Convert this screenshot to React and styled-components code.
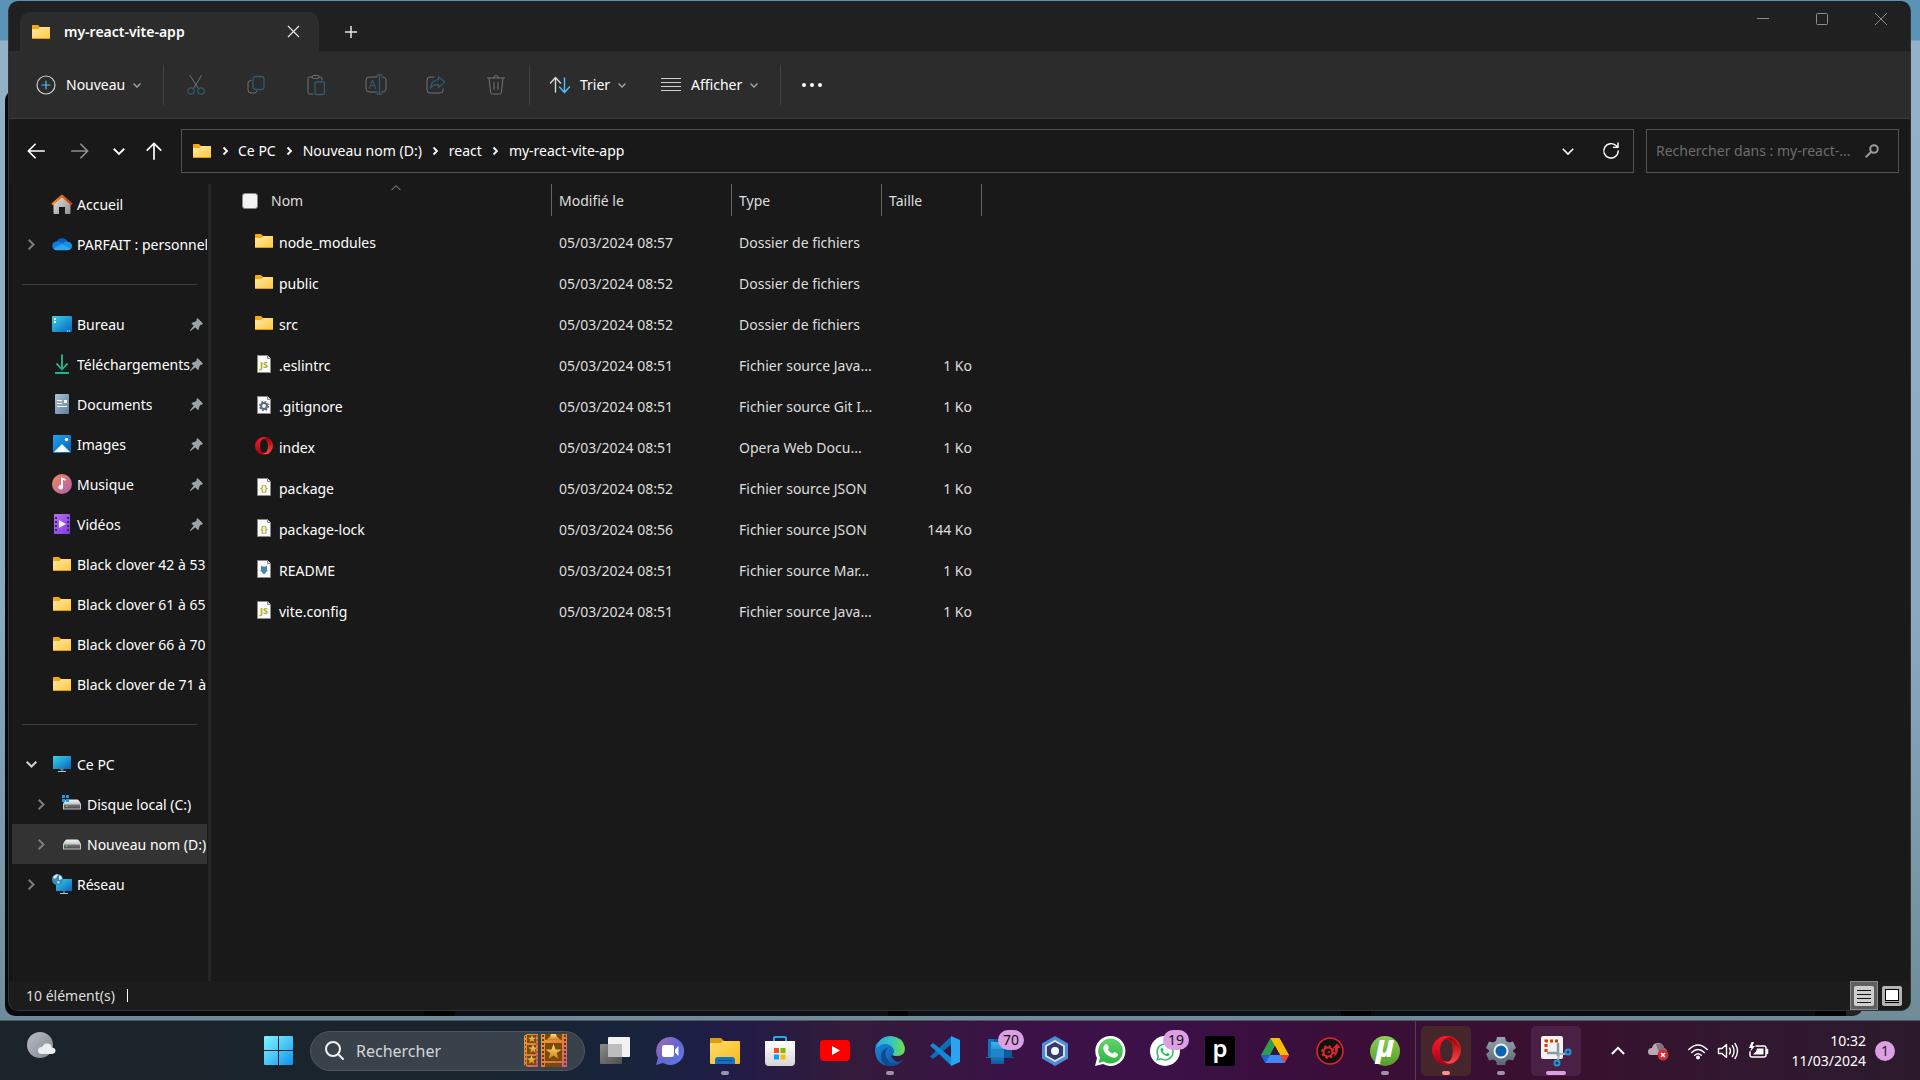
import React from "react";
import styled, { createGlobalStyle } from "styled-components";
import { FaWhatsapp } from "react-icons/fa";

const GlobalStyle = createGlobalStyle`
  *, *::before, *::after { box-sizing: border-box; }
  body {
    margin: 0;
    font-family: "Noto Sans", "Open Sans", sans-serif;
    font-size: 14px;
    line-height: 20px;
    color: #fff;
    background: #7f9fb2;
  }
  button, input { font: inherit; color: inherit; }
  button { border: 0; padding: 0; background: none; cursor: default; }
  a { color: inherit; text-decoration: none; cursor: default; }
  svg { display: block; flex: none; overflow: visible; }
`;

/* ---------- shared gradients ---------- */

const DefsSvg = styled.svg`
  position: absolute;
`;

const Grad = ({ id, from, to, mid, x2 = 1, y2 = 1 }) => (
  <linearGradient id={id} x1="0" y1="0" x2={x2} y2={y2}>
    <stop offset="0" stopColor={from} />
    {mid && <stop offset="0.5" stopColor={mid} />}
    <stop offset="1" stopColor={to} />
  </linearGradient>
);

const Gradients = () => (
  <DefsSvg width="0" height="0" aria-hidden="true">
    <defs>
      <Grad id="gFolder" from="#ffe9a6" to="#ffc83d" />
      <Grad id="gHouse" from="#e6e6e6" to="#8f8f8f" />
      <Grad id="gRoof" from="#ff8c1a" to="#c8430b" x2={1} y2={0} />
      <Grad id="gScreen" from="#37d3e6" to="#0b63c0" />
      <Grad id="gDown" from="#2fd07f" to="#12a8a0" x2={0} />
      <Grad id="gDoc" from="#b0c1d6" to="#5f7f9f" />
      <Grad id="gImage" from="#1fa3ec" to="#0562bd" />
      <Grad id="gMusic" from="#f58a5b" to="#a95fb0" />
      <Grad id="gVideo" from="#b86ff0" to="#7a3fd8" />
      <Grad id="gOperaOut" from="#ff1b2d" to="#a70014" x2={0} />
      <Grad id="gOperaIn" from="#9c0000" to="#ff4b4b" x2={0} />
      <Grad id="gDrive" from="#f4f4f4" to="#bfbfbf" x2={0} />
      <Grad id="gDriveFront" from="#7a7a7a" to="#4a4a4a" x2={0} />
      <Grad id="gWin" from="#7df3ff" mid="#4cc8f8" to="#0a92ef" />
      <Grad id="gMoon" from="#b9bec6" to="#80858e" />
      <Grad id="gChat" from="#a86fb0" mid="#6565d0" to="#5a7fe8" />
      <Grad id="gExpl" from="#ffdf6b" to="#f9b71a" />
      <Grad id="gStore" from="#ffffff" to="#d5d5d5" x2={0} />
      <Grad id="gEdgeTop" from="#2aa7e0" mid="#33c4c4" to="#6fe04a" x2={1} y2={0} />
      <Grad id="gEdgeLow" from="#1b8be0" to="#0c4f9e" />
      <Grad id="gWa" from="#63d36b" to="#2cb742" x2={0} />
      <Grad id="gUt" from="#8ccf50" to="#559c30" x2={0} />
      <Grad id="gGear" from="#97a3ad" to="#5a6670" x2={0} />
      <Grad id="gGold" from="#ffe680" to="#c97f12" x2={0} />
      <Grad id="gFilm" from="#f0a030" mid="#e0803a" to="#c85a8a" />
      <Grad id="gGray" from="#8a8a8a" to="#4e4e4e" />
      <Grad id="gFeed" from="#38b6f0" to="#0a5a9e" x2={0} />
    </defs>
  </DefsSvg>
);

/* ---------- small icons ---------- */

const FolderIcon = () => (
  <svg width="18" height="14" viewBox="0 0 18 14">
    <path d="M0 .7Q0 0 .7 0H6l2 2h9.300q.7 0 .7.700V8H0z" fill="#f5a90a" />
    <path d="M0 4h6.500L8 2h9.300q.7 0 .7.700V14H0z" fill="url(#gFolder)" />
    <path d="M0 13.500h18" stroke="#e09a10" />
  </svg>
);

const HomeIcon = () => (
  <svg width="20" height="20" viewBox="0 0 20 20">
    <path d="M1.500 8.500 10 1.500l8.500 7V19q0 1-1 1H13v-7H7v7H2.500q-1 0-1-1z" fill="url(#gHouse)" />
    <path d="m.8 9.800 9.200-8 9.200 8" fill="none" stroke="url(#gRoof)" strokeWidth="2.400" strokeLinecap="round" strokeLinejoin="round" />
  </svg>
);

const CloudIcon = () => (
  <svg width="20" height="14" viewBox="0 0 20 14">
    <path d="M4.500 5A6 6 0 0 1 15.500 4.500l-6 6z" fill="#0a5fc4" />
    <path d="M5 4.500Q8 4 10.500 6l4 3-9 4H4a4.200 4.200 0 0 1 1-8.500z" fill="#0f7fe0" />
    <path d="M10.500 6.500q2-2.500 5-2Q20 5 20 9t-4 4z" fill="#1490df" />
    <path d="M1.500 11.500 10 7l8.500 4.500Q17.500 13.200 16 13.200H4q-1.500 0-2.500-1.700z" fill="#2aa7f0" />
  </svg>
);

const DesktopIcon = () => (
  <svg width="20" height="16" viewBox="0 0 20 16">
    <rect width="20" height="16" rx="1" fill="url(#gScreen)" />
    <path d="M2 2h2v2H2zM2 5h2v2H2z" fill="#fff" />
    <path d="M15 15h1M17 15h1" stroke="#fff" />
  </svg>
);

const DownloadIcon = () => (
  <svg width="20" height="20" viewBox="0 0 20 20" fill="none" stroke="url(#gDown)" strokeWidth="1.800">
    <path d="M10 .5V15.500" stroke="#22c08c" />
    <path d="m4.500 9.500 5.500 6 5.500-6" />
    <path d="M3 19h14" stroke="#22c39a" />
  </svg>
);

const DocumentIcon = () => (
  <svg width="14" height="20" viewBox="0 0 14 20">
    <rect width="14" height="20" rx="1" fill="url(#gDoc)" />
    <path d="M2 6.500h5M2 9.500h5M2 12.500h10M9 7.500h3" stroke="#fff" strokeWidth="1.200" />
    <path d="M9 6h3v3H9z" fill="#fff" />
  </svg>
);

const ImageIcon = () => (
  <svg width="18" height="18" viewBox="0 0 18 18">
    <rect width="18" height="18" rx="1" fill="url(#gImage)" />
    <path d="m1 17 7.300-7.300q.7-.7 1.400 0L17 17z" fill="#f2f8ff" />
    <circle cx="13.500" cy="4.500" r="1.700" fill="#fff" />
  </svg>
);

const MusicIcon = () => (
  <svg width="20" height="20" viewBox="0 0 20 20">
    <circle cx="10" cy="10" r="10" fill="url(#gMusic)" />
    <circle cx="8.700" cy="13.200" r="2.300" fill="#fff" />
    <path d="M10 13V4.500L13.500 6" fill="none" stroke="#fff" strokeWidth="1.800" />
  </svg>
);

const VideoIcon = () => (
  <svg width="16" height="20" viewBox="0 0 16 20">
    <rect width="16" height="20" rx="1" fill="url(#gVideo)" />
    <path d="M2 3v15M14 3v15" stroke="#3d2270" strokeWidth="2" strokeDasharray="2 2" />
    <path d="M5 6v8l7-4z" fill="#f3e9ff" />
  </svg>
);

const ScreenIcon = () => (
  <svg width="18" height="16" viewBox="0 0 18 16">
    <rect width="18" height="13" rx=".5" fill="url(#gScreen)" />
    <path d="M7.500 13h3v1.500h-3z" fill="#888" />
    <path d="M5 15.500h8" stroke="#b9c2ca" />
  </svg>
);

const DriveIcon = ({ system }) => (
  <svg width="18" height="11" viewBox="0 0 18 11">
    <path d="M0 5Q2 .5 4 .5h10q2 0 4 4.500v1H0z" fill="url(#gDrive)" />
    <path d="M0 5h18v5.500H0z" fill="#c4c4c4" />
    <path d="M1 5.500h16v4H1z" fill="url(#gDriveFront)" />
    <path d="M3 6.500h1.500V8H3z" fill="#3be04a" />
    {system && <path d="M-1-4h3v3h-3zM3-4h3v3H3zM-1 0h3v3h-3zM3 0h3v3H3z" fill="#1a9af0" />}
  </svg>
);

const NetworkIcon = () => (
  <svg width="20" height="20" viewBox="0 0 20 20">
    <rect x="4" y="5" width="16" height="12" fill="url(#gScreen)" />
    <path d="M8 19.500h8M12 17v2" stroke="#b9c2ca" />
    <circle cx="5.500" cy="5.500" r="5.500" fill="#3a8cc0" />
    <path d="M1 3q4-4 5-2L4 4 2 5zM7 1q3 1 3 4l-3 1zM5 7l3 1-2 2z" fill="#d8eef8" />
  </svg>
);

const PinIcon = () => (
  <svg width="13" height="13" viewBox="0 0 13 13" fill="#97a2aa">
    <path d="M7.500 0 13 5.500 11.500 7 10.500 6.800 9 9.500 8.700 11.500 7.800 12 1.500 5.500 2.500 4.500 4.500 4 6.800 2.500 6.500 1z" />
    <path d="M4 8 .3 12.700 5 9z" stroke="#97a2aa" />
  </svg>
);

const FileIcon = ({ kind }) => (
  <svg width="14" height="18" viewBox="0 0 14 18">
    <path d="M.5.500h10l3 3v14H.500z" fill="#fbfbfb" stroke="#8b8b8b" />
    <path d="M10.500.500v3h3" fill="#ddd" stroke="#8b8b8b" />
    {kind === "js" && (
      <text x="7" y="13" textAnchor="middle" fontSize="9" fontWeight="800" fill="#b0b02c">JS</text>
    )}
    {kind === "json" && (
      <text x="7" y="13" textAnchor="middle" fontSize="9" fontWeight="700" fill="#b0b02c">{"{}"}</text>
    )}
    {kind === "git" && (
      <g fill="none" stroke="#5b6b78">
        <circle cx="7" cy="10" r="2.900" strokeWidth="2" />
        <circle cx="7" cy="10" r="4.400" strokeWidth="1.400" strokeDasharray="1.730 1.730" />
      </g>
    )}
    {kind === "md" && <path d="M4 5.500 5.500 6.500h3L10 5.500V10h1l-4 4.500L3 10h1z" fill="#4a8aa8" />}
  </svg>
);

const OperaIcon = ({ width = 18, height = 18 }) => (
  <svg width={width} height={height} viewBox="0 0 18 18" preserveAspectRatio="none">
    <path fillRule="evenodd" d="M9 0a9 9 0 1 0 0 18A9 9 0 1 0 9 0zM9 2c2.600 0 4 3.200 4 7s-1.400 7-4 7-4-3.200-4-7 1.400-7 4-7z" fill="url(#gOperaOut)" />
    <path d="M6.500 3.200Q8.500.9 11 .8 15 1 18 9q-1.500 7.500-7 8.300-2.500 0-4.500-2.500Q8 16.200 9.500 16 13 15.500 13 9T9.500 2Q8 1.800 6.500 3.200z" fill="url(#gOperaIn)" />
  </svg>
);

const Chevron = ({ dir = "down", w = 8, weight = 1 }) => {
  const paths = {
    down: "M.5.500 4 4 7.500.500",
    up: "M.5 4 4 .5 7.500 4",
    right: "M.5.500 4 4 .5 7.500",
  };
  const wide = dir !== "right";
  return (
    <svg
      width={wide ? w : w / 2}
      height={wide ? w / 2 : w}
      viewBox={wide ? "0 0 8 4" : "0 0 4 8"}
      fill="none"
      stroke="currentColor"
      strokeWidth={(weight * 8) / w}
    >
      <path d={paths[dir]} />
    </svg>
  );
};

const Glyph = ({ children, size = 20, weight = 1 }) => (
  <svg width={size} height={size} viewBox="0 0 20 20" fill="none" stroke="currentColor" strokeWidth={weight} strokeLinecap="round" strokeLinejoin="round">
    {children}
  </svg>
);

const DIM = "#2f5a73";

const toolIcons = {
  Couper: (
    <Glyph>
      <path d="M4 .5 12.300 13.500M15.500.500 7.500 13.500" />
      <g stroke={DIM} strokeWidth="1.300">
        <circle cx="5" cy="16" r="3.200" />
        <circle cx="15" cy="16" r="3.200" />
      </g>
    </Glyph>
  ),
  Copier: (
    <Glyph>
      <path d="M5 5.500q-3 0-3 2.500v7q0 3 3 3h3.500q2 0 2.500-2" />
      <rect x="7" y="1.500" width="11" height="13" rx="2.500" stroke={DIM} strokeWidth="1.300" />
    </Glyph>
  ),
  Coller: (
    <Glyph>
      <path d="M6 2H3.500Q2 2 2 3.500v14Q2 19 3.500 19H7M13 2h1.500Q16 2 16 3.500V5" />
      <rect x="6" y=".5" width="7" height="3" rx="1.500" />
      <rect x="9" y="7" width="9.500" height="12.500" rx="1.500" stroke={DIM} strokeWidth="1.300" />
    </Glyph>
  ),
  Renommer: (
    <Glyph>
      <path d="M11 2H3.500Q0 2 0 5.500v8Q0 17 3.500 17H11M16 2q4 0 4 3.500v8q0 3.500-4 3.500" />
      <g stroke={DIM} strokeWidth="1.300">
        <path d="M11 0h5M11 19h5M13.500 0v19" />
      </g>
      <text x="6.500" y="14" textAnchor="middle" fontSize="12" fill={DIM} stroke="none">A</text>
    </Glyph>
  ),
  Partager: (
    <Glyph>
      <path d="M8 2H4Q1 2 1 5v10q0 3 3 3h10q3 0 3-3v-1" />
      <path d="M12.500 1.500 18.500 7l-6 5.500V9.500Q7 9.500 4.500 13 5 5.500 12.500 4.700z" stroke={DIM} strokeWidth="1.300" />
    </Glyph>
  ),
  Supprimer: (
    <Glyph>
      <path d="M1.500 3h17M7.500 3Q7.500.500 10 .5T12.500 3M3 3l1.500 14q.3 2 2 2h7q1.700 0 2-2L17 3M8 7.500v7M12 7.500v7" />
    </Glyph>
  ),
};

/* ---------- desktop and window ---------- */

const Screen = styled.div`
  display: flex;
  flex-direction: column;
  min-height: 100vh;
  overflow: hidden;
`;

const Desktop = styled.main`
  position: relative;
  flex: 1;
  display: flex;
  padding: 1px 9px 9px 8px;
  background: linear-gradient(#5b93b7 0, #5b93b7 40px, #93b2c7 41px, #8aa9be 60%, #708c9b 100%);
`;

const BackWindow = styled.div`
  position: absolute;
  top: 90px;
  left: 5px;
  right: 57px;
  bottom: 4px;
  border-radius: 10px;
  background: linear-gradient(90deg, #07090d 419px, #000 419px, #000 450px, #0c1016 450px, #0c1016 883px, #000 883px, #000 903px, #0c1016 903px, #0c1016 1336px, #000 1336px, #000 1366px, #080c12 1366px, #080c12 1810px, #000 1810px, #000 1841px, #222 1841px);
`;

const Window = styled.section`
  position: relative;
  flex: 1;
  min-width: 0;
  display: flex;
  flex-direction: column;
  border: 1px solid #343434;
  border-top-color: #202020;
  border-radius: 10px;
  background: #191919;
  overflow: hidden;
`;

const TitleBar = styled.header`
  display: flex;
  align-items: flex-end;
  height: 49px;
  padding-left: 11px;
  background: #202020;
`;

const Tab = styled.div`
  display: flex;
  align-items: center;
  width: 299px;
  height: 39px;
  padding: 0 12px;
  border-radius: 10px 10px 0 0;
  background: #2c2c2c;
`;

const TabTitle = styled.h1`
  flex: 1;
  margin: 0 0 0 14px;
  font-size: 14px;
  line-height: 20px;
  font-weight: 600;
`;

const SquareButton = styled.button`
  display: flex;
  align-items: center;
  justify-content: center;
  width: ${(p) => p.$w || 28}px;
  height: ${(p) => p.$h || 28}px;
  color: ${(p) => p.$color || "#e6e6e6"};
`;

const Caption = styled.div`
  display: flex;
  align-self: flex-start;
  margin-left: auto;
`;

const Toolbar = styled.div`
  display: flex;
  align-items: center;
  height: 68px;
  border-bottom: 1px solid #3b3b3b;
  background: #2c2c2c;
`;

const LabelButton = styled.button`
  display: flex;
  align-items: center;
  width: ${(p) => p.$w}px;
  height: 40px;
  padding-left: ${(p) => p.$pad}px;
  white-space: nowrap;

  span { margin: 0 8px 0 10px; }
  svg:last-child { color: #a8a8a8; }
`;

const Divider = styled.div`
  width: 1px;
  height: 40px;
  margin-right: ${(p) => p.$gap || 0}px;
  background: #414141;
`;

const ToolGroup = styled.div`
  display: flex;
  margin-right: 3px;
`;

const NavRow = styled.div`
  display: flex;
  align-items: center;
  height: 65px;
  padding: 0 11px 1px 5px;
`;

const AddressBox = styled.nav`
  flex: 1;
  min-width: 0;
  display: flex;
  align-items: center;
  height: 44px;
  margin: 0 12px 0 9px;
  padding-left: 11px;
  border: 1px solid #535353;
`;

const Crumb = styled.span`
  display: flex;
  align-items: center;
  white-space: nowrap;
`;

const CrumbArrow = styled.span`
  display: flex;
  justify-content: center;
  width: 27px;
`;

const AddressTools = styled.div`
  display: flex;
  margin-left: auto;
`;

const SearchBox = styled.label`
  display: flex;
  align-items: center;
  width: 253px;
  height: 44px;
  padding: 0 19px 0 9px;
  border: 1px solid #535353;
  color: #9a9a9a;
`;

const SearchInput = styled.input`
  flex: 1;
  min-width: 0;
  padding: 0;
  border: 0;
  outline: 0;
  background: none;
  &::placeholder { color: #6d6d6d; opacity: 1; }
`;

const Body = styled.div`
  flex: 1;
  min-height: 0;
  display: flex;
`;

const Sidebar = styled.nav`
  width: 202px;
  flex: none;
  border-left: 3px solid #151515;
  border-right: 3px solid #262626;
  padding-right: 1px;
`;

const SideRow = styled.div`
  display: flex;
  align-items: center;
  height: 40px;
  padding-left: ${(p) => (p.$child ? 10 : 0)}px;
  background: ${(p) => (p.$selected ? "#333" : "none")};
`;

const SideLink = styled.a`
  flex: 1;
  min-width: 0;
  display: flex;
  align-items: center;
`;

const SideIcon = styled.span`
  display: flex;
  justify-content: center;
  flex: none;
  width: 20px;
  margin-right: 5px;
`;

const SideLabel = styled.span`
  padding-top: 2px;
  overflow: hidden;
  white-space: nowrap;
`;

const PinSlot = styled.span`
  display: flex;
  flex: none;
  width: 17px;
`;

const ToggleSlot = styled.span`
  display: flex;
  flex: none;
  width: 40px;
`;

const SideRule = styled.hr`
  height: 1px;
  margin: 20px 10px 19px;
  border: 0;
  background: #3d3d3d;
`;

const Files = styled.div`
  flex: 1;
  min-width: 0;
  padding-left: 1px;
`;

const Table = styled.table`
  table-layout: fixed;
  width: 770px;
  border-collapse: collapse;
`;

const Head = styled.th`
  width: ${(p) => p.$w}px;
  height: 38px;
  padding: 0;
  vertical-align: top;
  font-weight: 400;
  text-align: left;
  color: #dedede;
`;

const HeadInner = styled.div`
  position: relative;
  display: flex;
  align-items: center;
  height: 32px;
  padding-top: 2px;
  padding-left: ${(p) => (p.$first ? 30 : 7)}px;
  border-right: 1px solid #636363;
`;

const SortMark = styled.span`
  position: absolute;
  top: 1px;
  left: 179px;
  color: #9a9a9a;
`;

const Checkbox = styled.input`
  appearance: none;
  width: 16px;
  height: 16px;
  margin: 0 13px 0 0;
  border: 1px solid #868686;
  border-radius: 3px;
  background: #f3f3f3;
`;

const Cell = styled.td`
  height: 41px;
  padding: 0 10px 0 7px;
  color: #dedede;
  text-align: ${(p) => (p.$right ? "right" : "left")};
  white-space: nowrap;
`;

const NameCell = styled.a`
  display: flex;
  align-items: center;
  padding-left: 36px;
  color: #fff;
`;

const FileSlot = styled.span`
  display: flex;
  justify-content: center;
  width: 18px;
  margin-right: 6px;
  padding-bottom: 4px;
`;

const Status = styled.footer`
  display: flex;
  align-items: center;
  height: 29px;
  padding: 0 4px 0 17px;
  background: #1c1c1c;
  color: #dedede;
`;

const StatusMark = styled.span`
  width: 1px;
  height: 13px;
  margin-left: 12px;
  background: #fff;
`;

const ViewButton = styled.button`
  display: flex;
  align-items: center;
  justify-content: center;
  width: 28px;
  height: 29px;
  border: 1px solid ${(p) => (p.$on ? "#8a8a8a" : "transparent")};
  background: ${(p) => (p.$on ? "#5f5f5f" : "none")};
`;

/* ---------- taskbar ---------- */

const TaskBar = styled.footer`
  display: flex;
  align-items: center;
  height: 60px;
  border-top: 1px solid #5a5560;
  background: linear-gradient(90deg, #1c242b 0, #19242c 24%, #17243c 33%, #211c48 38%, #331b3a 44%, #3b1148 54%, #3b1148 60%, #3a0e38 70%, #39102f 80%, #30182f 92%, #2c1a2c 100%);
`;

const Weather = styled.button`
  flex: none;
  width: 253px;
  height: 50px;
  padding: 0 0 12px 27px;
  display: flex;
  align-items: center;
`;

const Apps = styled.div`
  display: flex;
  align-items: center;
  gap: 5px;
`;

const TaskSearch = styled.label`
  display: flex;
  align-items: center;
  width: 275px;
  height: 40px;
  margin-left: 2px;
  padding: 0 17px 0 14px;
  border: 1px solid #4d565e;
  border-radius: 20px;
  background: #39424b;
`;

const TaskInput = styled.input`
  flex: 1;
  min-width: 0;
  margin-left: 12px;
  padding: 0;
  border: 0;
  outline: 0;
  background: none;
  font-size: 16px;
  line-height: 24px;
  &::placeholder { color: #d3d6d9; opacity: 1; }
`;

const TaskButton = styled.button`
  position: relative;
  display: flex;
  align-items: center;
  justify-content: center;
  width: 50px;
  height: 50px;
  border-radius: 5px;
  background: ${(p) => p.$bg || "none"};

  &::after {
    content: "";
    position: absolute;
    left: 50%;
    bottom: 1px;
    width: ${(p) => p.$mark || 0}px;
    height: 4px;
    margin-left: -${(p) => (p.$mark || 0) / 2}px;
    border-radius: 2px;
    background: ${(p) => p.$markColor || "#9c93a4"};
  }
`;

const Badge = styled.span`
  position: absolute;
  top: 4px;
  right: 1px;
  min-width: 22px;
  height: 20px;
  padding: 0 5px;
  border-radius: 10px;
  background: #dc9fe4;
  color: #111;
  font-size: 14px;
  line-height: 20px;
`;

const LetterTile = styled.span`
  display: block;
  width: 30px;
  height: 30px;
  border-radius: 2px;
  background: #000;
  font-size: 24px;
  line-height: 24px;
  font-weight: 600;
  text-align: center;
`;

const TaskDivider = styled.div`
  width: 1px;
  height: 59px;
  background: #5a3a58;
`;

const Tray = styled.div`
  display: flex;
  align-items: center;
  margin-left: auto;
  padding-right: 25px;
`;

const TrayGroup = styled.div`
  display: flex;
  margin-left: 5px;
`;

const Clock = styled.time`
  width: 93px;
  margin-right: 9px;
  text-align: right;
`;

const Notice = styled.button`
  width: 20px;
  height: 20px;
  border-radius: 10px;
  background: #dc9fe4;
  color: #222;
  font-size: 14px;
  line-height: 20px;
`;

/* ---------- data ---------- */

const places = [
  { label: "Accueil", icon: <HomeIcon /> },
  { label: "PARFAIT : personnel", icon: <CloudIcon />, toggle: "right" },
  { rule: true },
  { label: "Bureau", icon: <DesktopIcon />, pin: true },
  { label: "Téléchargements", icon: <DownloadIcon />, pin: true },
  { label: "Documents", icon: <DocumentIcon />, pin: true },
  { label: "Images", icon: <ImageIcon />, pin: true },
  { label: "Musique", icon: <MusicIcon />, pin: true },
  { label: "Vidéos", icon: <VideoIcon />, pin: true },
  { label: "Black clover 42 à 53", icon: <FolderIcon /> },
  { label: "Black clover 61 à 65", icon: <FolderIcon /> },
  { label: "Black clover 66 à 70", icon: <FolderIcon /> },
  { label: "Black clover de 71 à", icon: <FolderIcon /> },
  { rule: true },
  { label: "Ce PC", icon: <ScreenIcon />, toggle: "down" },
  { label: "Disque local (C:)", icon: <DriveIcon system />, toggle: "right", child: true },
  { label: "Nouveau nom (D:)", icon: <DriveIcon />, toggle: "right", child: true, selected: true },
  { label: "Réseau", icon: <NetworkIcon />, toggle: "right" },
];

const files = [
  ["node_modules", "08:57", "Dossier de fichiers", "", "folder"],
  ["public", "08:52", "Dossier de fichiers", "", "folder"],
  ["src", "08:52", "Dossier de fichiers", "", "folder"],
  [".eslintrc", "08:51", "Fichier source Java...", "1 Ko", "js"],
  [".gitignore", "08:51", "Fichier source Git I...", "1 Ko", "git"],
  ["index", "08:51", "Opera Web Docu...", "1 Ko", "opera"],
  ["package", "08:52", "Fichier source JSON", "1 Ko", "json"],
  ["package-lock", "08:56", "Fichier source JSON", "144 Ko", "json"],
  ["README", "08:51", "Fichier source Mar...", "1 Ko", "md"],
  ["vite.config", "08:51", "Fichier source Java...", "1 Ko", "js"],
];

const fileIcon = (kind) => {
  if (kind === "folder") return <FolderIcon />;
  if (kind === "opera") return <OperaIcon />;
  return <FileIcon kind={kind} />;
};

const crumbs = ["Ce PC", "Nouveau nom (D:)", "react", "my-react-vite-app"];

/* ---------- taskbar icons ---------- */

const Pic = ({ children, w = 30, h = 30 }) => (
  <svg width={w} height={h} viewBox={`0 0 ${w} ${h}`}>{children}</svg>
);

const star = "M0-8 2-2.500 8-2.500 3.200 1 5 7 0 3.500-5 7-3.200 1-8-2.500-2-2.500z";

const FilmArt = () => (
  <Pic w={43} h={33}>
    <path d="M0 2 3 0h11v33H4L0 31z" fill="url(#gFilm)" />
    <path d="M3 1h9v8H3zM3 11h9v9H3zM3 22h9v9H3z" fill="#7a4a08" />
    <path d="M1.500 2v30M13 1v31" stroke="#8a4a30" strokeDasharray="2 2" />
    <rect x="17" width="26" height="33" fill="url(#gFilm)" />
    <path d="M21 0h17v6H21zM21 9h17v18H21zM21 29h17v4H21z" fill="#7a4a08" />
    <path d="M19 1v32M41 1v32" stroke="#6b3020" strokeWidth="2" strokeDasharray="2 2" />
    <g fill="url(#gGold)">
      <path d={star} transform="translate(29.500 18)" />
      <path d="M22 6 26 3 27 0h5l1 3 4 3z" />
      <path d={star} transform="translate(7.500 26) scale(.6)" />
      <path d={star} transform="translate(9 15) scale(.6)" />
      <path d={star} transform="translate(8 5) scale(.5)" />
    </g>
  </Pic>
);

const StartIcon = () => (
  <Pic w={29} h={29}>
    <path d="M1 0h13v14H0V1q0-1 1-1zM15 0h13q1 0 1 1v13H15zM0 15h14v14H1q-1 0-1-1zM15 15h14v13q0 1-1 1H15z" fill="url(#gWin)" />
  </Pic>
);

const TaskViewIcon = () => (
  <Pic>
    <rect x="0" y="8" width="22" height="20" rx="1" fill="url(#gGray)" />
    <rect x="8" y="1" width="22" height="20" rx="1" fill="#f2f2f2" />
    <path d="M8 8h14v13H8z" fill="#bdbdbd" />
  </Pic>
);

const ChatIcon = () => (
  <Pic>
    <path d="M15 1a14 14 0 1 1-7 26L1 29 3 22A14 14 0 0 1 15 1z" fill="url(#gChat)" />
    <rect x="7" y="9" width="12" height="12" rx="2" fill="#fff" />
    <path d="M20 13.500 23.500 10v10L20 16.500z" fill="#fff" />
  </Pic>
);

const ExplorerIcon = () => (
  <Pic>
    <path d="M0 3q0-1 1-1h10l3 3v5H0z" fill="#dd9d10" />
    <path d="M0 7h11l2-2h16q1 0 1 1v21q0 1-1 1H1q-1 0-1-1z" fill="url(#gExpl)" />
    <path d="M5 28v-4q0-3 3-3h14q3 0 3 3v4z" fill="#0d74c8" />
    <path d="M8 24.500h14" stroke="#073f7a" />
  </Pic>
);

const StoreIcon = () => (
  <Pic>
    <path d="M9 6V2q0-1 1-1h10q1 0 1 1v4" fill="none" stroke="#28a8ea" strokeWidth="2" />
    <path d="M0 5h30v21q0 4-4 4H4q-4 0-4-4z" fill="url(#gStore)" />
    <path d="M9 12h5v5H9z" fill="#f25022" />
    <path d="M15.500 12h5v5h-5z" fill="#7fba00" />
    <path d="M9 18.500h5v5H9z" fill="#00a4ef" />
    <path d="M15.500 18.500h5v5h-5z" fill="#ffb900" />
  </Pic>
);

const YoutubeIcon = () => (
  <Pic w={30} h={21}>
    <rect width="30" height="21" rx="4" fill="#f00" />
    <path d="M12 6v9l8-4.500z" fill="#fff" />
  </Pic>
);

const EdgeIcon = () => (
  <Pic>
    <path d="M0 15Q0 7 5 5q9-4 14 3 3 5 0 11l-3 1q6 10 13 3Q24 30 15 30 1 29 0 15z" fill="url(#gEdgeLow)" />
    <path d="M1 12Q4 0 16 0 28 1 30 12q0 8-8 8-5 0-4-2 2-3 0-6Q11 4 1 12z" fill="url(#gEdgeTop)" />
    <path d="M13 12q-4 3-2 9 4 8 12 7-4 2-8 2Q5 28 6 19q1-6 7-7z" fill="#0d4a94" />
  </Pic>
);

const CodeIcon = () => (
  <Pic>
    <path d="M22 0v8L3 23 0 20.500 20 1.500z" fill="#0a6fb8" />
    <path d="M22 30v-8L3 7 0 9.500l20 19z" fill="#1287d4" />
    <path d="M21 0 30 4v22l-9 4z" fill="#2aa4f0" />
  </Pic>
);

const FeedIcon = () => (
  <Pic>
    <path d="M3 3h24v18h2v1H1v-1h2z" fill="#0a5c9c" />
    <path d="M3 3h6v19H3z" fill="#1272b8" />
    <rect x="6" y="6" width="13" height="22" fill="url(#gFeed)" />
    <path d="M6 13h13v8H6z" fill="#1d86cf" />
  </Pic>
);

const HexIcon = () => (
  <Pic>
    <path d="M15 0 28 7.500v15L15 30 2 22.500v-15z" fill="#4a90d8" />
    <path d="M15 5 24 10v10l-9 5-9-5V10z" fill="#323a70" stroke="#e4e4ee" strokeWidth="1.800" />
    <circle cx="15" cy="15" r="4" fill="#fff" />
  </Pic>
);

const WhatsAppIcon = () => (
  <Pic>
    <path d="M15 0a15 15 0 1 1-7 28L0 30 2 22A15 15 0 0 1 15 0z" fill="#fff" />
    <path d="M15 2.500a12.500 12.500 0 1 1-6.500 23L3.500 27 5 21.500A12.500 12.500 0 0 1 15 2.500z" fill="url(#gWa)" />
    <path d="M10 8.500q2-1.500 3 1l.8 2q.3.700-1 2 1.700 3 4.700 4.200 1.500-2 2.200-1.500l2.800 1.300q1 .5 0 2.500-2 3-6.500 1Q9.500 18.500 8.300 13q-.3-3 1.700-4.500z" fill="#fff" />
  </Pic>
);

const WhatsAppRound = () => (
  <Pic>
    <circle cx="15" cy="15" r="15" fill="#fff" />
    <g color="#25c05a">
      <FaWhatsapp x="5" y="6" size={20} />
    </g>
  </Pic>
);

const GDriveIcon = () => (
  <Pic w={28} h={25}>
    <path d="M9.500 0h9L14 8 5 25 0 17z" fill="#2e9e4f" />
    <path d="M9.500 0h9L28 17h-9z" fill="#fbbc04" />
    <path d="M0 17h28l-4.500 8h-19z" fill="#4285f4" />
    <path d="M19 17h9l-4.500 8z" fill="#ea4335" />
    <path d="M0 17h9l-4.500 8z" fill="#1d63d0" />
    <path d="M14 8l5 9H9z" fill="#33133f" />
  </Pic>
);

const GearArrowIcon = () => (
  <Pic w={28} h={28}>
    <circle cx="14" cy="14" r="13" fill="#111" stroke="#e3262e" strokeWidth="1.500" />
    <circle cx="12" cy="15" r="4.500" fill="none" stroke="#e3262e" strokeWidth="2" />
    <circle cx="12" cy="15" r="6" fill="none" stroke="#e3262e" strokeWidth="1.800" strokeDasharray="2.350 2.350" />
    <path d="M14 15h-2.500" stroke="#e3262e" strokeWidth="1.500" />
    <path d="M17 20q3-2 2-9h-2l4-4.500 3.500 4.500H22q0 7-5 9z" fill="#e3262e" />
  </Pic>
);

const TorrentIcon = () => (
  <Pic>
    <circle cx="15" cy="15" r="15" fill="url(#gUt)" />
    <text x="15" y="21" textAnchor="middle" fontSize="30" fontWeight="800" fontStyle="italic" fill="#fff">µ</text>
  </Pic>
);

const SettingsIcon = () => (
  <Pic>
    <path d="M11 1h8l1 4 3 1.500L27 5.500 30 12l-3 2.500v1L30 18l-3 6.500-4-1L20 25l-1 4h-8l-1-4-3-1.500-4 1L0 18l3-2.500v-1L0 12 3 5.500l4 1L10 5z" fill="url(#gGear)" />
    <circle cx="15" cy="15" r="6.500" fill="#0b63b5" stroke="#eef2f5" strokeWidth="2" />
  </Pic>
);

const SnipIcon = () => (
  <Pic>
    <rect x="0" y="0" width="22" height="23" rx="2" fill="#f3f3f3" />
    <path d="M5 16V5h12" fill="none" stroke="#d83b01" strokeWidth="3" strokeDasharray="3 2" />
    <path d="M17 7v13M6 17h12" stroke="#8d99a3" strokeWidth="2.500" />
    <path d="M18 18l6 0M18 18l-1 6" stroke="#a9b4bc" strokeWidth="2" />
    <g fill="none" stroke="#1b9be0" strokeWidth="2">
      <circle cx="27" cy="16" r="2.500" />
      <circle cx="16" cy="27" r="2.500" />
    </g>
  </Pic>
);

const apps = [
  { name: "Vue des tâches", icon: <TaskViewIcon /> },
  { name: "Conversation", icon: <ChatIcon /> },
  { name: "Explorateur de fichiers", icon: <ExplorerIcon />, mark: 8 },
  { name: "Microsoft Store", icon: <StoreIcon /> },
  { name: "YouTube", icon: <YoutubeIcon /> },
  { name: "Microsoft Edge", icon: <EdgeIcon />, mark: 8 },
  { name: "Visual Studio Code", icon: <CodeIcon /> },
  { name: "Lien avec Windows", icon: <FeedIcon />, badge: "70" },
  { name: "Hexagone", icon: <HexIcon /> },
  { name: "WhatsApp", icon: <WhatsAppIcon /> },
  { name: "WhatsApp Web", icon: <WhatsAppRound />, badge: "19" },
  { name: "Application P", icon: <LetterTile>p</LetterTile> },
  { name: "Google Drive", icon: <GDriveIcon /> },
  { name: "Mise à jour", icon: <GearArrowIcon /> },
  { name: "µTorrent", icon: <TorrentIcon />, mark: 8 },
];

/* ---------- views ---------- */

function Place({ item }) {
  if (item.rule) return <SideRule />;
  return (
    <SideRow $child={item.child} $selected={item.selected}>
      <ToggleSlot>
        {item.toggle && (
          <SquareButton $w={38} $color={item.toggle === "down" ? "#d0d0d0" : "#7d7d7d"} aria-label={"Développer " + item.label}>
            <Chevron dir={item.toggle} w={11} weight={2} />
          </SquareButton>
        )}
      </ToggleSlot>
      <SideLink href="#">
        <SideIcon>{item.icon}</SideIcon>
        <SideLabel>{item.label}</SideLabel>
      </SideLink>
      {item.pin && (
        <PinSlot>
          <PinIcon />
        </PinSlot>
      )}
    </SideRow>
  );
}

function Explorer() {
  return (
    <Window>
      <TitleBar>
        <Tab>
          <FolderIcon />
          <TabTitle>my-react-vite-app</TabTitle>
          <SquareButton aria-label="Fermer l’onglet">
            <svg width="11" height="11" viewBox="0 0 11 11" stroke="currentColor" strokeWidth="1.200">
              <path d="m0 0 11 11M11 0 0 11" />
            </svg>
          </SquareButton>
        </Tab>
        <SquareButton $w={64} $h={39} aria-label="Nouvel onglet">
          <svg width="12" height="12" viewBox="0 0 12 12" stroke="currentColor" strokeWidth="1.500">
            <path d="M0 6h12M6 0v12" />
          </svg>
        </SquareButton>
        <Caption>
          <SquareButton $w={58} $h={34} $color="#8c8c8c" aria-label="Réduire">
            <svg width="12" height="12" viewBox="0 0 12 12" stroke="currentColor"><path d="M0 5.500h12" /></svg>
          </SquareButton>
          <SquareButton $w={60} $h={34} $color="#8c8c8c" aria-label="Agrandir">
            <svg width="12" height="12" viewBox="0 0 12 12" fill="none" stroke="currentColor"><rect x=".5" y=".5" width="11" height="11" rx="1" /></svg>
          </SquareButton>
          <SquareButton $w={58} $h={34} $color="#8c8c8c" aria-label="Fermer">
            <svg width="12" height="12" viewBox="0 0 12 12" stroke="currentColor"><path d="m0 0 12 12M12 0 0 12" /></svg>
          </SquareButton>
        </Caption>
      </TitleBar>

      <Toolbar>
        <LabelButton $w={154} $pad={27}>
          <Glyph>
            <circle cx="10" cy="10" r="9" stroke="#d0d0d0" strokeWidth="1.200" />
            <path d="M6 10h8M10 6v8" stroke="#4cc2ff" strokeWidth="1.200" />
          </Glyph>
          <span>Nouveau</span>
          <Chevron weight={1.3} />
        </LabelButton>
        <Divider $gap={2} />
        <ToolGroup>
          {Object.entries(toolIcons).map(([name, icon]) => (
            <SquareButton key={name} $w={60} $h={40} $color="#737373" aria-label={name}>
              {icon}
            </SquareButton>
          ))}
        </ToolGroup>
        <Divider />
        <LabelButton $w={111} $pad={20}>
          <Glyph weight={1.4}>
            <path d="M5.500 17V3M.5 8l5-5.500 5 5.500" stroke="#d8d8d8" />
            <path d="M14.500 3v14M9.500 12l5 5.500 5-5.500" stroke="#4cc2ff" />
          </Glyph>
          <span>Trier</span>
          <Chevron weight={1.3} />
        </LabelButton>
        <LabelButton $w={139} $pad={20}>
          <svg width="20" height="15" viewBox="0 0 20 15" stroke="#d0d0d0">
            <path d="M0 1.500h20M0 5.500h20M0 9.500h20M0 13.500h20" />
          </svg>
          <span>Afficher</span>
          <Chevron weight={1.3} />
        </LabelButton>
        <Divider />
        <SquareButton $w={61} $h={40} $color="#fff" aria-label="Voir plus">
          <svg width="20" height="4" viewBox="0 0 20 4" fill="currentColor">
            <circle cx="2" cy="2" r="2" /><circle cx="10" cy="2" r="2" /><circle cx="18" cy="2" r="2" />
          </svg>
        </SquareButton>
      </Toolbar>

      <NavRow>
        <SquareButton $w={44} $color="#fff" aria-label="Précédent">
          <Glyph size={18} weight={1.9}><path d="M19 10H1.500M9 2.500 1.500 10 9 17.500" /></Glyph>
        </SquareButton>
        <SquareButton $w={44} $color="#8f8f8f" aria-label="Suivant">
          <Glyph size={18} weight={1.9}><path d="M1 10h17.500M11 2.500l7.500 7.500-7.500 7.500" /></Glyph>
        </SquareButton>
        <SquareButton $w={34} $color="#fff" aria-label="Emplacements récents">
          <Chevron w={12} weight={1.8} />
        </SquareButton>
        <SquareButton $w={36} $color="#fff" aria-label="Dossier parent">
          <Glyph size={18} weight={1.9}><path d="M10 19V1.500M2.500 9 10 1.500 17.500 9" /></Glyph>
        </SquareButton>
        <AddressBox aria-label="Chemin">
          <FolderIcon />
          {crumbs.map((c) => (
            <Crumb key={c}>
              <CrumbArrow><Chevron dir="right" w={8} weight={1.8} /></CrumbArrow>
              <a href="#">{c}</a>
            </Crumb>
          ))}
          <AddressTools>
            <SquareButton $w={42} $color="#fff" aria-label="Historique"><Chevron w={12} weight={1.6} /></SquareButton>
            <SquareButton $w={44} $color="#fff" aria-label="Actualiser">
              <Glyph size={18} weight={1.6}><path d="M18 10a8 8 0 1 1-2.500-6l2 2M17.800 1v5h-5" /></Glyph>
            </SquareButton>
          </AddressTools>
        </AddressBox>
        <SearchBox>
          <SearchInput type="text" aria-label="Rechercher dans le dossier" placeholder="Rechercher dans : my-react-..." />
          <svg width="14" height="14" viewBox="0 0 14 14" fill="none" stroke="currentColor" strokeWidth="2">
            <circle cx="9" cy="5" r="3.800" />
            <path d="M6.300 7.700.700 13.300" />
          </svg>
        </SearchBox>
      </NavRow>

      <Body>
        <Sidebar aria-label="Emplacements">
          {places.map((item, i) => (
            <Place key={i} item={item} />
          ))}
        </Sidebar>
        <Files>
          <Table>
            <thead>
              <tr>
                <Head $w={340}>
                  <HeadInner $first>
                    <Checkbox type="checkbox" aria-label="Tout sélectionner" />
                    Nom
                    <SortMark><Chevron dir="up" w={10} /></SortMark>
                  </HeadInner>
                </Head>
                <Head $w={180}><HeadInner>Modifié le</HeadInner></Head>
                <Head $w={150}><HeadInner>Type</HeadInner></Head>
                <Head $w={100}><HeadInner>Taille</HeadInner></Head>
              </tr>
            </thead>
            <tbody>
              {files.map(([name, time, type, size, kind]) => (
                <tr key={name}>
                  <Cell>
                    <NameCell href="#">
                      <FileSlot>{fileIcon(kind)}</FileSlot>
                      {name}
                    </NameCell>
                  </Cell>
                  <Cell>05/03/2024 {time}</Cell>
                  <Cell>{type}</Cell>
                  <Cell $right>{size}</Cell>
                </tr>
              ))}
            </tbody>
          </Table>
        </Files>
      </Body>

      <Status>
        10 élément(s)
        <StatusMark />
        <AddressTools>
          <ViewButton $on aria-label="Détails">
            <svg width="20" height="20" viewBox="0 0 20 20">
              <rect width="20" height="20" rx="2" fill="#cfcfcf" />
              <path d="M3 4.500h14M3 8.500h14M3 12.500h14M3 16.500h14" stroke="#111" />
            </svg>
          </ViewButton>
          <ViewButton aria-label="Grandes icônes">
            <svg width="20" height="20" viewBox="0 0 20 20">
              <rect width="20" height="20" rx="2" fill="#b4b4b4" />
              <rect x="3.500" y="3.500" width="13" height="11" fill="#fff" stroke="#000" />
              <path d="M3 16.500h14" stroke="#000" />
            </svg>
          </ViewButton>
        </AddressTools>
      </Status>
    </Window>
  );
}

function Bar() {
  return (
    <TaskBar>
      <Weather aria-label="Météo">
        <Pic w={28} h={26}>
          <circle cx="13" cy="13" r="13" fill="url(#gMoon)" />
          <path d="M15 22q-4 0-4-3.500t4-3.500q2-4 6-3.500 3.500.500 4 4 3.500.500 3.500 3.300T25 22z" fill="#eceff2" />
        </Pic>
      </Weather>
      <Apps>
        <TaskButton aria-label="Démarrer"><StartIcon /></TaskButton>
        <TaskSearch>
          <svg width="19" height="19" viewBox="0 0 19 19" fill="none" stroke="#f0f0f0" strokeWidth="2">
            <circle cx="8" cy="8" r="7" />
            <path d="m13 13 5 5" strokeLinecap="round" />
          </svg>
          <TaskInput type="text" aria-label="Rechercher" placeholder="Rechercher" />
          <FilmArt />
        </TaskSearch>
        {apps.map((a) => (
          <TaskButton key={a.name} $mark={a.mark} aria-label={a.name}>
            {a.icon}
            {a.badge && <Badge>{a.badge}</Badge>}
          </TaskButton>
        ))}
        <TaskDivider />
        <TaskButton $bg="#45262b" $mark={8} $markColor="#ff8d96" aria-label="Opera">
          <OperaIcon width={29} height={29} />
        </TaskButton>
        <TaskButton $mark={8} aria-label="Paramètres"><SettingsIcon /></TaskButton>
        <TaskButton $bg="#4a2045" $mark={20} $markColor="#dc9fe4" aria-label="Outil Capture">
          <SnipIcon />
        </TaskButton>
      </Apps>
      <Tray>
        <SquareButton $w={40} $color="#fff" aria-label="Icônes cachées">
          <Chevron dir="up" w={14} weight={2} />
        </SquareButton>
        <SquareButton $w={40} aria-label="OneDrive">
          <Pic w={20} h={18}>
            <path d="M3 13q-3 0-3-3.500T4 6Q5 1 10 1t6 5q3 1 3 4t-3 3z" fill="#b9a8b6" />
            <path d="M8 2q7-1 8 4 3 1 3 4l-3 3-6-5z" fill="#84707f" />
            <circle cx="15" cy="13" r="5.500" fill="#d32b35" />
            <path d="m13 11 4 4M17 11l-4 4" stroke="#fff" strokeWidth="1.500" />
          </Pic>
        </SquareButton>
        <TrayGroup>
          <SquareButton $w={30} $color="#fff" aria-label="Réseau sans fil">
            <Glyph weight={1.5}>
              <path d="M.8 8.500q9.200-9 18.400 0M3.700 11.500q6.300-6 12.600 0M6.700 14.300q3.300-3 6.600 0" />
              <circle cx="10" cy="16.500" r="1.200" fill="currentColor" />
            </Glyph>
          </SquareButton>
          <SquareButton $w={30} $color="#fff" aria-label="Volume">
            <Glyph weight={1.4}>
              <path d="M.5 7.500h3.500l4.500-4v13l-4.500-4H.500zM11.500 7q2 3 0 6M14.300 4.500q3.500 5.500 0 11M17 2.500q5 7.500 0 15" />
            </Glyph>
          </SquareButton>
          <SquareButton $w={30} $color="#fff" aria-label="Batterie">
            <Glyph weight={1.5}>
              <path d="M8 5h8q2 0 2 2v7q0 2-2 2H4q-2 0-2-2v-3M19.500 8.500v4" />
              <path d="M9 7.500h6.500v6H5l3-3z" fill="currentColor" stroke="none" />
              <path d="M3.500 1 1 7h2.500L2 11l5-6H4.500L6 1z" fill="currentColor" stroke="none" />
            </Glyph>
          </SquareButton>
        </TrayGroup>
        <Clock>
          10:32
          <br />
          11/03/2024
        </Clock>
        <Notice>1</Notice>
      </Tray>
    </TaskBar>
  );
}

export default function App() {
  return (
    <Screen>
      <GlobalStyle />
      <Gradients />
      <Desktop>
        <BackWindow />
        <Explorer />
      </Desktop>
      <Bar />
    </Screen>
  );
}
